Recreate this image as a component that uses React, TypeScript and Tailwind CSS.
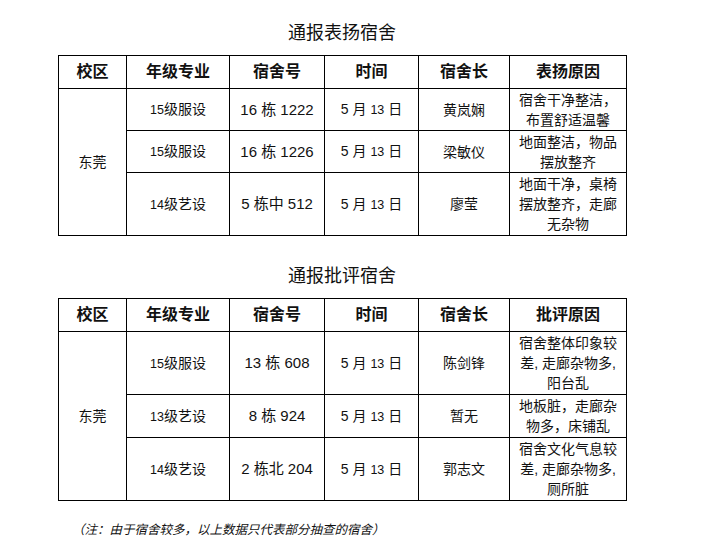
const FONT = { fontFamily: '"Liberation Sans", "Noto Sans CJK SC", sans-serif' };

type Row = { major: string; room: string; leader: string; reason: string[]; h: number };

const PRAISE: Row[] = [
  { major: "15级服设", room: "16 栋 1222", leader: "黄岚娴", reason: ["宿舍干净整洁，", "布置舒适温馨"], h: 42 },
  { major: "15级服设", room: "16 栋 1226", leader: "梁敏仪", reason: ["地面整洁，物品", "摆放整齐"], h: 42 },
  { major: "14级艺设", room: "5 栋中 512", leader: "廖莹", reason: ["地面干净，桌椅", "摆放整齐，走廊", "无杂物"], h: 63 },
];

const CRITIC: Row[] = [
  { major: "15级服设", room: "13 栋 608", leader: "陈剑锋", reason: ["宿舍整体印象较", "差, 走廊杂物多,", "阳台乱"], h: 63 },
  { major: "13级艺设", room: "8 栋 924", leader: "暂无", reason: ["地板脏，走廊杂", "物多，床铺乱"], h: 43 },
  { major: "14级艺设", room: "2 栋北 204", leader: "郭志文", reason: ["宿舍文化气息较", "差, 走廊杂物多,", "厕所脏"], h: 63 },
];

const cell = "border border-black text-center align-middle p-0";

function ReportTable({ title, reasonLabel, rows, gapTop }: { title: string; reasonLabel: string; rows: Row[]; gapTop: string }) {
  return (
    <div className={`w-[568px] ${gapTop}`}>
      <h2 className="text-center text-[18px] leading-[24px] text-[#111] mb-[10px]">{title}</h2>
      <table className="w-[568px] border-collapse table-fixed text-[#111]">
        <colgroup>
          <col className="w-[68px]" />
          <col className="w-[103px]" />
          <col className="w-[95px]" />
          <col className="w-[94px]" />
          <col className="w-[91px]" />
          <col className="w-[117px]" />
        </colgroup>
        <thead>
          <tr className="h-[33px] text-[16px] font-bold">
            <th className={cell}>校区</th>
            <th className={cell}>年级专业</th>
            <th className={cell}>宿舍号</th>
            <th className={cell}>时间</th>
            <th className={cell}>宿舍长</th>
            <th className={cell}>{reasonLabel}</th>
          </tr>
        </thead>
        <tbody className="text-[14px] leading-[20px]">
          {rows.map((r, i) => (
            <tr key={i} style={{ height: r.h }}>
              {i === 0 && (
                <td className={cell} rowSpan={rows.length}>
                  东莞
                </td>
              )}
              <td className={cell}>
                <span className="text-[12.5px]">{r.major.slice(0, 2)}</span>
                {r.major.slice(2)}
              </td>
              <td className={`${cell} text-[15px]`}>{r.room}</td>
              <td className={cell}>
                5 月 <span className="text-[12.5px]">13</span> 日
              </td>
              <td className={cell}>{r.leader}</td>
              <td className={cell}>
                {r.reason.map((l, j) => (
                  <div key={j} className="whitespace-nowrap">
                    {l}
                  </div>
                ))}
              </td>
            </tr>
          ))}
        </tbody>
      </table>
    </div>
  );
}

export default function App() {
  return (
    <div className="w-[711px] h-[544px] bg-white pt-[21px] pl-[58px]" style={FONT}>
      <ReportTable title="通报表扬宿舍" reasonLabel="表扬原因" rows={PRAISE} gapTop="" />
      <ReportTable title="通报批评宿舍" reasonLabel="批评原因" rows={CRITIC} gapTop="mt-[28px]" />
      <p className="mt-[20px] ml-[14px] text-[12.5px] italic text-[#111]">
        （注：由于宿舍较多，以上数据只代表部分抽查的宿舍）
      </p>
    </div>
  );
}
